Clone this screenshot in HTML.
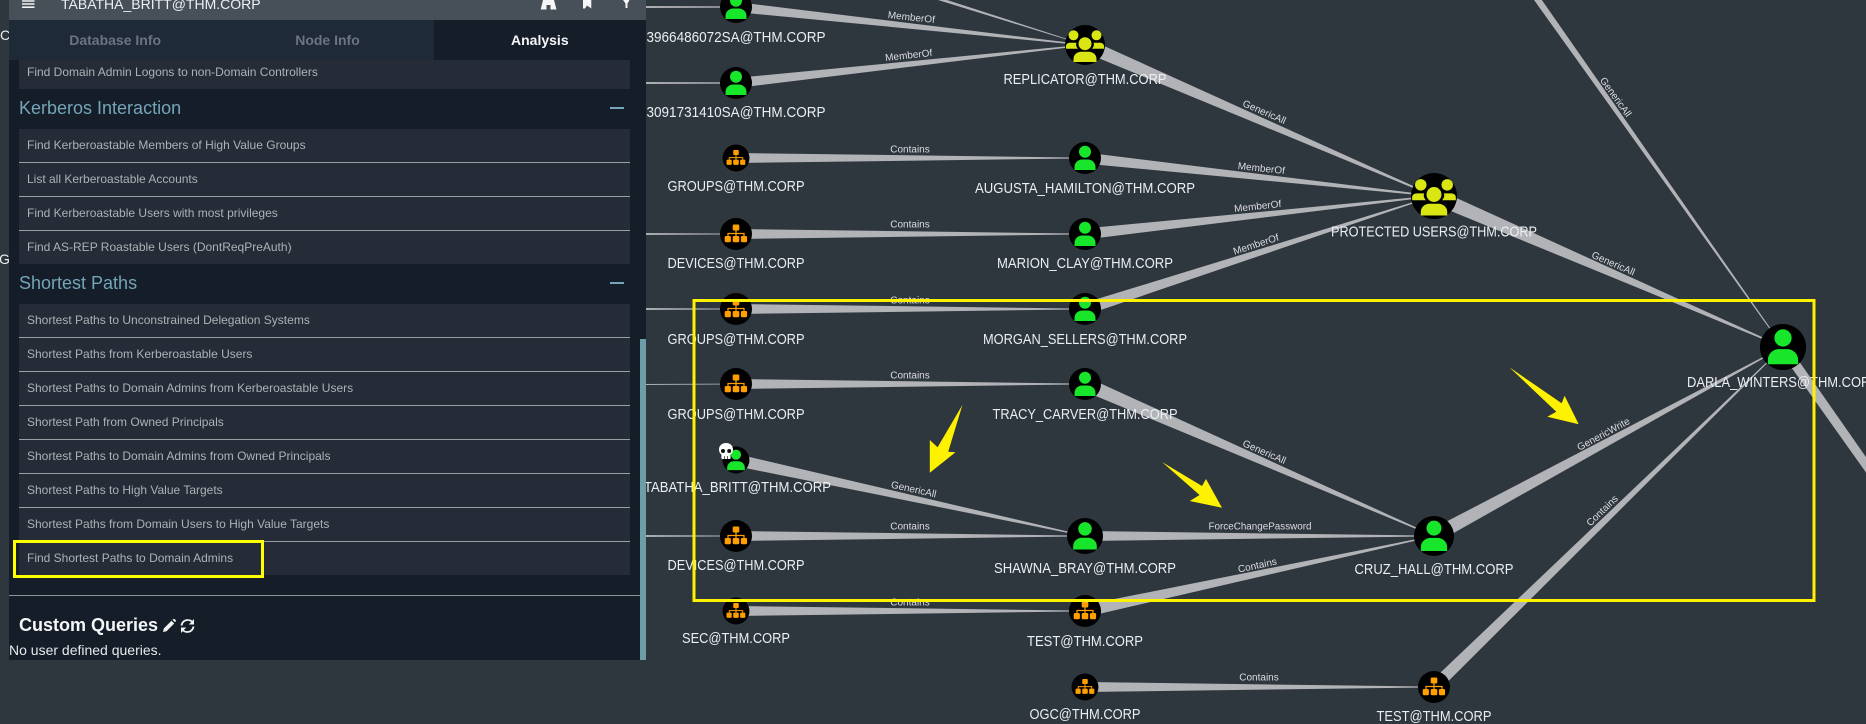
<!DOCTYPE html>
<html>
<head>
<meta charset="utf-8">
<style>
html,body{margin:0;padding:0;width:1866px;height:724px;overflow:hidden;background:#2e363e;font-family:"Liberation Sans",sans-serif}
#g{position:absolute;left:0;top:0}
.n{font-size:15px;fill:#eceff1;text-anchor:middle}
.e{font-size:10px;fill:#dcdde0;text-anchor:middle}
#p{position:absolute;left:9px;top:0;width:637px;height:660px;background:#151d29;overflow:hidden}
#h{position:absolute;left:0;top:0;width:637px;height:20px;background:#474f59}
#ht{position:absolute;left:52px;top:-5px;font-size:14px;line-height:18px;color:#eef0f2;white-space:nowrap}
.t{position:absolute;top:20px;width:212.33px;height:40px;background:#1e2a38;color:#6b7480;font-weight:bold;font-size:14px;line-height:40px;text-align:center}
.r{position:absolute;left:10px;width:611px;height:33px;background:#252c38;border-bottom:1px solid #9b9fa4;color:#aeb1b5;font-size:12px;line-height:33px;text-indent:8px;white-space:nowrap}
.s{position:absolute;left:10px;font-size:18px;line-height:24px;color:#74a5b8}
.m{position:absolute;left:601px;width:14px;height:2px;background:#74a5b8}
</style>
</head>
<body>
<svg id="g" width="1866" height="724" viewBox="0 0 1866 724" xmlns="http://www.w3.org/2000/svg">
<defs>
<g id="u"><circle r="16" fill="#000"/><circle cy="-6.3" r="6" fill="#17e62b"/><path d="M-10.5 12V9C-10.5 4-6 1.5-3 1.5H3C6 1.5 10.5 4 10.5 9V12Z" fill="#17e62b"/></g>
<g id="o"><circle r="16" fill="#000"/><g fill="#ffa000"><rect x="-3.3" y="-9.5" width="6.6" height="6" rx="1.2"/><rect x="-11.3" y="2" width="6.2" height="6.2" rx="1.2"/><rect x="-3.3" y="2" width="6.6" height="6.2" rx="1.2"/><rect x="4.9" y="2" width="6.2" height="6.2" rx="1.2"/></g><path d="M0-4V2M-8 2V-.5H8V2" stroke="#ffa000" stroke-width="1.2" fill="none"/></g>
<g id="y"><circle r="20" fill="#000"/><g fill="#d9e614"><circle cx="-11.5" cy="-9.7" r="5"/><circle cx="11.5" cy="-9.7" r="5"/><circle cx="0" cy="-1.3" r="6.5"/><path d="M-11.5 17V14C-11.5 9-7 6.7-4 6.7H4C7 6.7 11.5 9 11.5 14V17Z"/><path d="M-19 3.7V1C-19-1-17-2.3-15-2.3H-8.5C-9.5 0-8.5 2-7 3.7Z"/><path d="M19 3.7V1C19-1 17-2.3 15-2.3H8.5C9.5 0 8.5 2 7 3.7Z"/></g></g>
</defs>

<text x="0" y="40" font-size="14" fill="#eceff1">C</text>
<text x="-1" y="264" font-size="14" fill="#eceff1">G</text>

<g fill="#b2b3b7">
<polygon points="640,6 736,6.4 736,7.6 640,8"/>
<polygon points="640,82 736,82.4 736,83.6 640,84"/>
<polygon points="640,233 736,233.6 736,234.4 640,235"/>
<polygon points="640,308 736,308.6 736,309.4 640,310"/>
<polygon points="640,384 736,383.6 736,384.4 640,385"/>
<polygon points="640,535 736,535.6 736,536.4 640,537"/>
<polygon points="735.5,12 736.5,2 1085,44.5 1085,45.5"/>
<polygon points="736.5,88 735.5,78 1085,44.5 1085,45.5"/>
<polygon points="938,0 947,0 1085,44.7 1085,45.3"/>
<polygon points="1082.2,51.4 1087.8,38.6 1434.2,195.5 1433.8,196.5"/>
<polygon points="736,153 1085,157.6 1085,158.4 736,163"/>
<polygon points="736,229 1085,233.6 1085,234.4 736,239"/>
<polygon points="736,304 1085,308.6 1085,309.4 736,314"/>
<polygon points="736,379 1085,383.6 1085,384.4 736,389"/>
<polygon points="736,531 1085,535.6 1085,536.4 736,541"/>
<polygon points="736,606 1085,610.6 1085,611.4 736,616"/>
<polygon points="1085,682 1434,686.6 1434,687.4 1085,692"/>
<polygon points="1085,531 1434,535.6 1434,536.4 1085,541"/>
<polygon points="1084.4,163.5 1085.6,152.5 1434,195.5 1434,196.5"/>
<polygon points="1085.6,239.5 1084.4,228.5 1434,195.5 1434,196.5"/>
<polygon points="1086.8,314.7 1083.2,303.3 1434,195.6 1434,196.4"/>
<polygon points="1431,202.9 1437,189.1 1783.2,346.6 1782.8,347.4"/>
<polygon points="1529,-7 1537,-7 1783.3,346.8 1782.7,347.2"/>
<polygon points="1082.2,390.4 1087.8,377.6 1434.2,535.6 1433.8,536.4"/>
<polygon points="734.7,465.9 737.3,454.1 1085.1,535.6 1084.9,536.4"/>
<polygon points="1086.3,616.9 1083.7,605.1 1433.9,535.6 1434.1,536.4"/>
<polygon points="1437.3,542.2 1430.7,529.8 1782.8,346.7 1783.2,347.3"/>
<polygon points="1438.2,691.3 1429.8,682.7 1782.8,346.8 1783.2,347.2"/>
<polygon points="1778.9,349.9 1787.1,344.1 1886.5,486.5 1879.5,491.5"/>
</g>

<use href="#u" transform="translate(736,7)"/>
<use href="#u" transform="translate(736,83)"/>
<use href="#y" transform="translate(1085,45)"/>
<use href="#o" transform="translate(736,158) scale(.84)"/>
<use href="#u" transform="translate(1085,158)"/>
<use href="#o" transform="translate(736,234)"/>
<use href="#u" transform="translate(1085,234)"/>
<use href="#o" transform="translate(736,309)"/>
<use href="#u" transform="translate(1085,309)"/>
<use href="#o" transform="translate(736,384)"/>
<use href="#u" transform="translate(1085,384)"/>
<use href="#u" transform="translate(736,460) scale(.84)"/>
<use href="#o" transform="translate(736,536)"/>
<use href="#u" transform="translate(1085,536) scale(1.125)"/>
<use href="#o" transform="translate(736,611) scale(.84)"/>
<use href="#o" transform="translate(1085,611)"/>
<use href="#o" transform="translate(1085,687) scale(.84)"/>
<use href="#o" transform="translate(1434,687)"/>
<use href="#u" transform="translate(1434,536) scale(1.25)"/>
<use href="#y" transform="translate(1434,196) scale(1.15)"/>
<use href="#u" transform="translate(1783,347) scale(1.44)"/>

<g>
<path d="M726 443c4.5 0 7 3 7 6.6 0 2.2-1 3.9-2.4 4.9V458c0 .6-.4 1-1 1h-7.2c-.6 0-1-.4-1-1v-3.5c-1.4-1-2.4-2.7-2.4-4.9 0-3.6 2.5-6.6 7-6.6z" fill="#fff"/>
<circle cx="723" cy="451" r="2" fill="#111"/><circle cx="729.2" cy="451" r="2" fill="#111"/>
<path d="M724.6 456v3M727.4 456v3" stroke="#222" stroke-width=".7"/>
</g>

<g class="labels">
<text class="n" x="736" y="42" textLength="179" lengthAdjust="spacingAndGlyphs">3966486072SA@THM.CORP</text>
<text class="n" x="736" y="117" textLength="179" lengthAdjust="spacingAndGlyphs">3091731410SA@THM.CORP</text>
<text class="n" x="1085" y="84" textLength="163" lengthAdjust="spacingAndGlyphs">REPLICATOR@THM.CORP</text>
<text class="n" x="736" y="191" textLength="137" lengthAdjust="spacingAndGlyphs">GROUPS@THM.CORP</text>
<text class="n" x="1085" y="193" textLength="220" lengthAdjust="spacingAndGlyphs">AUGUSTA_HAMILTON@THM.CORP</text>
<text class="n" x="736" y="268" textLength="137" lengthAdjust="spacingAndGlyphs">DEVICES@THM.CORP</text>
<text class="n" x="1085" y="268" textLength="176" lengthAdjust="spacingAndGlyphs">MARION_CLAY@THM.CORP</text>
<text class="n" x="736" y="344" textLength="137" lengthAdjust="spacingAndGlyphs">GROUPS@THM.CORP</text>
<text class="n" x="1085" y="344" textLength="204" lengthAdjust="spacingAndGlyphs">MORGAN_SELLERS@THM.CORP</text>
<text class="n" x="736" y="419" textLength="137" lengthAdjust="spacingAndGlyphs">GROUPS@THM.CORP</text>
<text class="n" x="1085" y="419" textLength="185" lengthAdjust="spacingAndGlyphs">TRACY_CARVER@THM.CORP</text>
<text class="n" x="737.5" y="492" textLength="187" lengthAdjust="spacingAndGlyphs">TABATHA_BRITT@THM.CORP</text>
<text class="n" x="736" y="570" textLength="137" lengthAdjust="spacingAndGlyphs">DEVICES@THM.CORP</text>
<text class="n" x="1085" y="573" textLength="182" lengthAdjust="spacingAndGlyphs">SHAWNA_BRAY@THM.CORP</text>
<text class="n" x="736" y="643" textLength="108" lengthAdjust="spacingAndGlyphs">SEC@THM.CORP</text>
<text class="n" x="1085" y="646" textLength="116" lengthAdjust="spacingAndGlyphs">TEST@THM.CORP</text>
<text class="n" x="1085" y="719" textLength="111" lengthAdjust="spacingAndGlyphs">OGC@THM.CORP</text>
<text class="n" x="1434" y="574" textLength="159" lengthAdjust="spacingAndGlyphs">CRUZ_HALL@THM.CORP</text>
<text class="n" x="1434" y="721" textLength="115" lengthAdjust="spacingAndGlyphs">TEST@THM.CORP</text>
<text class="n" x="1783" y="387" textLength="192" lengthAdjust="spacingAndGlyphs">DARLA_WINTERS@THM.CORP</text>
<text class="n" x="1434" y="236.500" textLength="206" lengthAdjust="spacingAndGlyphs">PROTECTED USERS@THM.CORP</text>
</g>

<g>
<text class="e" transform="translate(911,20.5) rotate(6.2)">MemberOf</text>
<text class="e" transform="translate(909,58.5) rotate(-6.2)">MemberOf</text>
<text class="e" x="910" y="152.5">Contains</text>
<text class="e" x="910" y="227.5">Contains</text>
<text class="e" x="910" y="303.5">Contains</text>
<text class="e" x="910" y="378.5">Contains</text>
<text class="e" x="910" y="529.5">Contains</text>
<text class="e" x="910" y="605.5">Contains</text>
<text class="e" x="1259" y="680.5">Contains</text>
<text class="e" transform="translate(1263,115) rotate(23.4)">GenericAll</text>
<text class="e" transform="translate(1261,171.5) rotate(6.2)">MemberOf</text>
<text class="e" transform="translate(1258,209.5) rotate(-6.2)">MemberOf</text>
<text class="e" transform="translate(1257,247.5) rotate(-18)">MemberOf</text>
<text class="e" transform="translate(1263,455) rotate(23.5)">GenericAll</text>
<text class="e" transform="translate(913,492.5) rotate(12.3)">GenericAll</text>
<text class="e" x="1260" y="529.5" textLength="103" lengthAdjust="spacingAndGlyphs">ForceChangePassword</text>
<text class="e" transform="translate(1258,568.5) rotate(-12)">Contains</text>
<text class="e" transform="translate(1612,266.5) rotate(23.4)">GenericAll</text>
<text class="e" transform="translate(1613,99) rotate(54.2)">GenericAll</text>
<text class="e" transform="translate(1605,437) rotate(-28.4)">GenericWrite</text>
<text class="e" transform="translate(1604.5,513) rotate(-44.3)">Contains</text>
</g>

<rect x="694" y="300.5" width="1120" height="300" fill="none" stroke="#fff200" stroke-width="3"/>
<g fill="#fff200">
<polygon points="962.4,405 948.2,451.7 955.5,452.3 929.8,472.7 929.8,440 937.6,447.3"/>
<polygon points="1162,462 1202,486 1206,479 1222,507.7 1189.8,501 1199.6,495"/>
<polygon points="1509.4,367.3 1561.7,403.3 1564.6,395.7 1578.7,424.3 1547.3,416.7 1556.3,411.7"/>
</g>
</svg>

<div id="p">
  <div id="h">
    <svg width="637" height="20" style="position:absolute;left:0;top:0">
      <path d="M13 1H25.500M13 4H25.500M13 7.200H25.500" stroke="#f2f2f2" stroke-width="1.600"/>
      <path d="M534 0H545L547.500 9.500H541.500V5H537.500V9.500H531.700Z" fill="#f6f6f6"/>
      <path d="M574 0H582.300V8.500L578 5.500L576 8.500H574Z" fill="#f6f6f6"/>
      <path d="M614 0H620.500L618.500 3.500V8H616.500V3.500Z" fill="#f6f6f6"/>
    </svg>
    <div id="ht">TABATHA_BRITT@THM.CORP</div>
  </div>
  <div class="t" style="left:0">Database Info</div>
  <div class="t" style="left:212.33px">Node Info</div>
  <div class="t" style="left:424.67px;background:#151d29;color:#f5f6f7">Analysis</div>

  <div class="r" style="top:60px;height:29px;line-height:24px;border:0">Find Domain Admin Logons to non-Domain Controllers</div>

  <div class="s" style="top:96px">Kerberos Interaction</div>
  <div class="m" style="top:107px"></div>
  <div class="r" style="top:129px">Find Kerberoastable Members of High Value Groups</div>
  <div class="r" style="top:163px">List all Kerberoastable Accounts</div>
  <div class="r" style="top:197px">Find Kerberoastable Users with most privileges</div>
  <div class="r" style="top:231px;border:0">Find AS-REP Roastable Users (DontReqPreAuth)</div>

  <div class="s" style="top:271px">Shortest Paths</div>
  <div class="m" style="top:282px"></div>
  <div class="r" style="top:304px">Shortest Paths to Unconstrained Delegation Systems</div>
  <div class="r" style="top:338px">Shortest Paths from Kerberoastable Users</div>
  <div class="r" style="top:372px">Shortest Paths to Domain Admins from Kerberoastable Users</div>
  <div class="r" style="top:406px">Shortest Path from Owned Principals</div>
  <div class="r" style="top:440px">Shortest Paths to Domain Admins from Owned Principals</div>
  <div class="r" style="top:474px">Shortest Paths to High Value Targets</div>
  <div class="r" style="top:508px">Shortest Paths from Domain Users to High Value Targets</div>
  <div class="r" style="top:542px;border:0">Find Shortest Paths to Domain Admins</div>
  <div style="position:absolute;left:4px;top:540px;width:245px;height:32px;border:3px solid #ffff00"></div>

  <div style="position:absolute;left:0;top:595px;width:631px;height:1px;background:#8d9298"></div>
  <div style="position:absolute;left:10px;top:614px;font-size:18px;line-height:22px;font-weight:bold;color:#f5f6f7">Custom Queries</div>
  <svg width="40" height="16" style="position:absolute;left:152px;top:618px">
    <path d="M2 14L2.800 10.500L10.500 2.800L13.200 5.500L5.500 13.200ZM11.500 1.800L12.500 1Q13 .7 13.500 1L14.800 2.300Q15.100 2.800 14.800 3.300L14 4.300Z" fill="#f2f2f2"/>
    <path d="M20.500 7.500C21 4 24 1.800 27 2C29.500 2.100 31 3.500 31.800 4.500M32.500 8.500C32 12 29 14.200 26 14C23.500 13.900 22 12.500 21.200 11.500" fill="none" stroke="#f2f2f2" stroke-width="1.800"/>
    <path d="M33 1V6.500H27.800ZM20 15V9.500H25.200Z" fill="#f2f2f2"/>
  </svg>
  <div style="position:absolute;left:0;top:642px;font-size:14px;line-height:16px;color:#e6e8ea">No user defined queries.</div>
  <div style="position:absolute;left:631px;top:339px;width:6px;height:321px;background:#6d9ea6"></div>
</div>
</body>
</html>
